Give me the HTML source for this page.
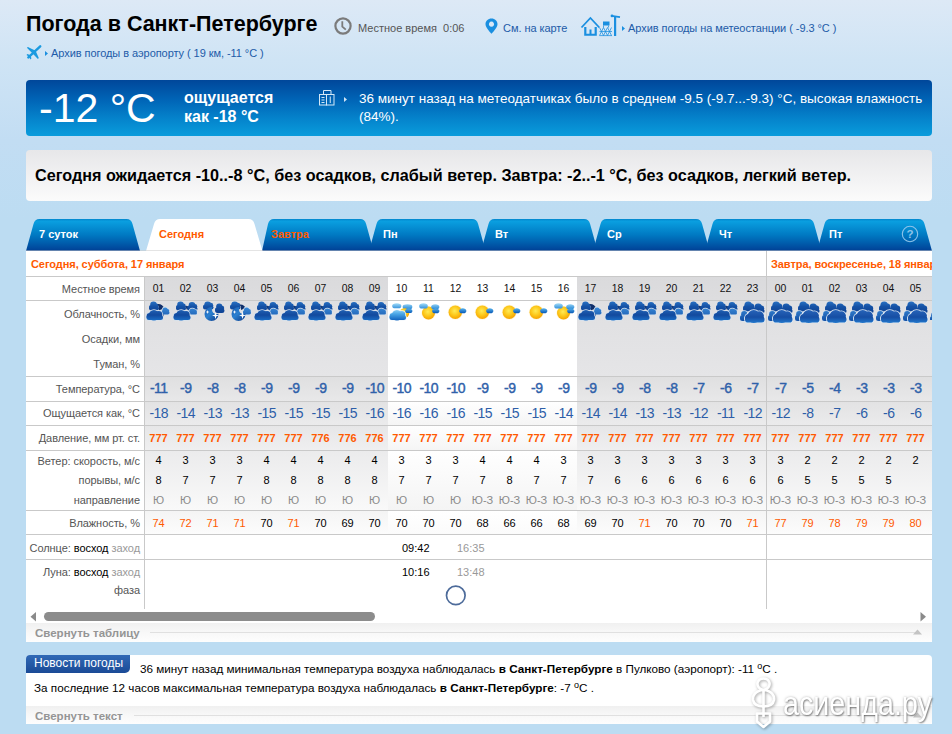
<!DOCTYPE html>
<html><head><meta charset="utf-8"><style>
*{margin:0;padding:0;box-sizing:border-box}
html,body{width:952px;height:734px;overflow:hidden}
body{position:relative;font-family:"Liberation Sans", sans-serif;background:linear-gradient(#dde9f6 0px,#cfe4f5 60px,#c2ddf3 140px,#bcdcf2 220px,#bcdcf2 734px);}
.title{position:absolute;left:26px;top:12px;font-size:21.5px;font-weight:bold;color:#000;white-space:nowrap}
.t11{position:absolute;font-size:11px;white-space:nowrap;line-height:16px}
.g5{color:#555}
.lnk{color:#1d5ba8;letter-spacing:-0.06px}
.bluebox{position:absolute;left:26px;top:80px;width:906px;height:56px;border-radius:4px;background:linear-gradient(#00479a 0%,#0064b6 35%,#0584cc 70%,#099cdc 100%);}
.bigT{position:absolute;left:13px;top:5px;font-size:41px;color:#fff;white-space:nowrap;line-height:46px}
.feels{position:absolute;left:158px;top:9px;font-size:16px;font-weight:bold;color:#fff;line-height:18.5px;white-space:nowrap}
.obs{position:absolute;left:333px;top:9.5px;font-size:13.5px;color:#fff;line-height:18px;white-space:nowrap}
.graybox{position:absolute;left:26px;top:150px;width:906px;height:51px;border-radius:4px;background:linear-gradient(#e7e7e9,#f3f3f4 60%,#fbfbfb);}
.fc{position:absolute;left:9px;top:15px;font-size:16.2px;font-weight:bold;color:#000;white-space:nowrap;line-height:20px}
.tabl{position:absolute;top:227px;font-size:11px;font-weight:bold;line-height:14px;white-space:nowrap}
.panel{position:absolute;left:26px;top:251px;width:906px;height:391px;background:#fff}
.shade{position:absolute;background:#e2e2e4}
.hl{position:absolute;height:1px;background:#c9c9c9}
.vl{position:absolute;width:1px;background:#c9c9c9}
.date{position:absolute;top:257px;font-size:11px;letter-spacing:-0.07px;font-weight:bold;color:#ff5a00;white-space:nowrap;line-height:14px}
.lab{position:absolute;left:26px;width:114px;text-align:right;font-size:11px;letter-spacing:-0.06px;color:#555;white-space:nowrap;line-height:14px}
.lab b{color:#000;font-weight:normal}
.g9{color:#999}
.c{position:absolute;width:27px;text-align:center;font-size:11px;line-height:14px;white-space:nowrap}
.c11{position:absolute;font-size:11px;line-height:14px;white-space:nowrap}
.b{color:#000}
.hr{color:#111;font-size:10.4px}
.tmp{color:#2f61aa;font-size:14px;letter-spacing:-0.5px;text-indent:0.5px;-webkit-text-stroke:0.4px #2f61aa}
.fl{color:#2d5ea8;font-size:14px;letter-spacing:-0.55px;text-indent:0.55px}
.pr{color:#ff5a00;font-weight:bold;font-size:11px}
.wd{color:#000}
.dr{color:#8a8a8a}
.hu{color:#000}
.hu.or{color:#ff5a00;-webkit-text-stroke:0px}
.coll{position:absolute;left:26px;width:906px;background:linear-gradient(#f0f0f0,#f8f8f8 50%,#fdfdfd)}
.coll span{position:absolute;left:9px;top:3px;font-size:11.5px;font-weight:bold;color:#959595;white-space:nowrap;line-height:14px}
.cline{position:absolute;height:1px;background:#e0e0e0}
.news{position:absolute;left:26px;top:655px;width:906px;height:51px;background:#fff;border-radius:4px 4px 0 0}
.badge{position:absolute;left:0;top:0;width:104px;height:18px;background:linear-gradient(#3069b6,#1a4a96);border-radius:4px 0 5px 0;color:#fff;font-size:12px;line-height:17px;padding-left:8px;white-space:nowrap}
.nt{position:absolute;font-size:11.7px;color:#000;white-space:nowrap;line-height:14px}
.nt sup{font-size:9px;vertical-align:4px;line-height:0}
.wm{position:absolute;left:751px;top:676px;width:201px;height:58px;color:#fff}
.wm span{position:absolute;left:32px;top:8px;font-size:33px;transform:scaleX(0.87);transform-origin:0 0;text-shadow:1px 1px 2px rgba(0,0,0,0.45),0 0 3px rgba(0,0,0,0.25);white-space:nowrap;line-height:40px}
.wm svg{filter:drop-shadow(1px 1px 1.5px rgba(0,0,0,0.35))}
</style></head>
<body>
<svg width="0" height="0" style="position:absolute"><defs>
<linearGradient id="gb" gradientUnits="userSpaceOnUse" x1="0" y1="1" x2="0" y2="12"><stop offset="0" stop-color="#2a74c6"/><stop offset="0.5" stop-color="#1552a6"/><stop offset="1" stop-color="#0f4496"/></linearGradient>
<linearGradient id="gm" gradientUnits="userSpaceOnUse" x1="0" y1="7" x2="0" y2="20"><stop offset="0" stop-color="#3a8ad8"/><stop offset="1" stop-color="#1553a8"/></linearGradient>
<linearGradient id="gf" gradientUnits="userSpaceOnUse" x1="0" y1="10" x2="0" y2="20"><stop offset="0" stop-color="#1f5fb2"/><stop offset="0.5" stop-color="#124a9e"/><stop offset="1" stop-color="#1a6ac2"/></linearGradient>
<linearGradient id="gf2" gradientUnits="userSpaceOnUse" x1="0" y1="10" x2="0" y2="23"><stop offset="0" stop-color="#2763b8"/><stop offset="0.55" stop-color="#164ea4"/><stop offset="1" stop-color="#2277cc"/></linearGradient>
<linearGradient id="gmoon" gradientUnits="userSpaceOnUse" x1="6" y1="8" x2="18" y2="21"><stop offset="0" stop-color="#1a5fb4"/><stop offset="0.45" stop-color="#2b80d0"/><stop offset="1" stop-color="#0f3f8e"/></linearGradient>
<linearGradient id="gl" gradientUnits="userSpaceOnUse" x1="0" y1="9" x2="0" y2="20"><stop offset="0" stop-color="#9ad8f8"/><stop offset="0.45" stop-color="#4aa6e6"/><stop offset="1" stop-color="#1466c0"/></linearGradient>
<linearGradient id="gs" gradientUnits="userSpaceOnUse" x1="0" y1="8" x2="0" y2="13"><stop offset="0" stop-color="#5cb8f0"/><stop offset="1" stop-color="#0b5cb8"/></linearGradient>
<linearGradient id="gs2" gradientUnits="userSpaceOnUse" x1="0" y1="3" x2="0" y2="9"><stop offset="0" stop-color="#a8e0fa"/><stop offset="1" stop-color="#2a8ad8"/></linearGradient>
<mask id="mmoon" maskUnits="userSpaceOnUse" x="0" y="0" width="27" height="23"><rect x="0" y="0" width="27" height="23" fill="#fff"/><circle cx="17.5" cy="9.5" r="4.6" fill="#000"/></mask>
<radialGradient id="sun" cx="0.45" cy="0.4" r="0.62"><stop offset="0" stop-color="#ffea55"/><stop offset="0.55" stop-color="#fcc71a"/><stop offset="1" stop-color="#f6a000"/></radialGradient>
</defs></svg>

<div class="title">Погода в Санкт-Петербурге</div>
<svg style="position:absolute;left:334px;top:17px" width="18" height="18" viewBox="0 0 18 18"><circle cx="9" cy="9" r="7.6" fill="none" stroke="#7b7b7b" stroke-width="2.2"/><path d="M8.3 4.2 V9.6 L11.8 12.6" fill="none" stroke="#7b7b7b" stroke-width="1.8"/></svg>
<div class="t11 g5" style="left:358px;top:20px">Местное время&nbsp;&nbsp;0:06</div>
<svg style="position:absolute;left:485px;top:18px" width="13" height="16" viewBox="0 0 13 16"><path d="M6.5 0.5 C3 0.5 0.5 3 0.5 6.3 C0.5 9.8 6.5 15.8 6.5 15.8 C6.5 15.8 12.5 9.8 12.5 6.3 C12.5 3 10 0.5 6.5 0.5 Z M6.5 3.6 A2.6 2.6 0 1 1 6.49 3.6 Z" fill="#1a8fe0" fill-rule="evenodd"/></svg>
<div class="t11 lnk" style="left:503px;top:20px">См. на карте</div>
<svg style="position:absolute;left:580px;top:14px" width="42" height="23" viewBox="0 0 42 23"><path d="M1.5 13.5 L10.4 4 L19.3 13.5" fill="none" stroke="#1a8fe0" stroke-width="1.8"/><path d="M4 12 V21.8 H17 V12" fill="none" stroke="#1a8fe0" stroke-width="0"/><path d="M4.2 13 V21.8 H16.8 V13 H14.6 V19.8 H11.5 V15.5 H9.5 V19.8 H6.4 V13 Z" fill="#1a8fe0"/><rect x="23" y="7.5" width="6.5" height="4" fill="#1a8fe0"/><path d="M19.5 21.5 L23.5 13.5 L27.5 21.5 L31.5 13.5 M19.5 13.5 L23.5 21.5 L27.5 13.5 L31.5 21.5 M19.5 17.5 H32 M19.5 21.6 H32 M23.5 11.5 V13.5 M28.5 11.5 V13.5" fill="none" stroke="#1a8fe0" stroke-width="0.9" opacity="0.85"/><rect x="34" y="2" width="2.2" height="20" fill="#1a8fe0"/><path d="M31.5 1.8 L40 3.2" stroke="#1a8fe0" stroke-width="1.8"/><circle cx="32" cy="1.9" r="1.4" fill="#1a8fe0"/></svg>
<svg style="position:absolute;left:622px;top:26px" width="4" height="5" viewBox="0 0 4 5"><path d="M0 0 L3 2.5 L0 5Z" fill="#1a8fe0"/></svg>
<div class="t11 lnk" style="left:628px;top:20px">Архив погоды на метеостанции ( -9.3 °C )</div>
<svg style="position:absolute;left:26px;top:45px" width="16" height="15" viewBox="0 0 16 15"><path d="M2.4 12.4 L14.2 1.3" stroke="#1a9ae0" stroke-width="2.4" stroke-linecap="round"/><path d="M0.9 2.7 L1.9 1.9 L9.6 5.8 L12.8 13.1 L11.9 13.9 L6.6 8.4 Z" fill="#1a9ae0"/><path d="M0.5 9.9 L1.4 8.9 L4.6 10.2 L5.4 13.6 L4.4 14.4 L3 11.8 Z" fill="#1a9ae0"/></svg>
<svg style="position:absolute;left:45px;top:51px" width="4" height="5" viewBox="0 0 4 5"><path d="M0 0 L3 2.5 L0 5Z" fill="#1a8fe0"/></svg>
<div class="t11 lnk" style="left:51px;top:45px">Архив погоды в аэропорту ( 19 км, -11 °C )</div>


<div class="bluebox">
 <div class="bigT">-12 °C</div>
 <div class="feels">ощущается<br>как -18 °C</div>
 <svg style="position:absolute;left:293px;top:9px" width="17" height="17" viewBox="0 0 17 17"><g fill="none" stroke="#d4e8f7" stroke-width="1"><path d="M4.5 5 V1.5 H12 V5"/><rect x="0.5" y="5.5" width="7" height="10.5"/><rect x="7.5" y="5.5" width="7.5" height="10.5"/><path d="M2.5 8.5 H5.5 M2.5 11 H5.5 M2.5 13.5 H5.5 M11.25 7.5 V14"/></g></svg>
 <svg style="position:absolute;left:318px;top:17px" width="3" height="5" viewBox="0 0 3 5"><path d="M0 0 L3 2.5 L0 5Z" fill="#cfe4f5"/></svg>
 <div class="obs">36 минут назад на метеодатчиках было в среднем -9.5 (-9.7...-9.3) °C, высокая влажность<br>(84%).</div>
</div>
<div class="graybox"><div class="fc">Сегодня ожидается -10..-8 °C, без осадков, слабый ветер. Завтра: -2..-1 °C, без осадков, легкий ветер.</div></div>

<svg style="position:absolute;left:26px;top:218px" width="906" height="34" viewBox="0 0 906 34">
<defs><linearGradient id="tg" gradientUnits="userSpaceOnUse" x1="0" y1="1" x2="0" y2="33"><stop offset="0" stop-color="#0386cd"/><stop offset="0.07" stop-color="#0a9fe0"/><stop offset="0.5" stop-color="#0079c2"/><stop offset="0.93" stop-color="#00489c"/><stop offset="1" stop-color="#003d92"/></linearGradient></defs>
<path d="M0.0 33 L7.5 6 Q8.8 1 13.5 1 L100.5 1 Q105.2 1 106.5 6 L114.0 33 Z" fill="url(#tg)"/>
<path d="M236.0 33 L242.0 6 Q243.3 1 248.0 1 L334.1 1 Q338.8 1 340.1 6 L347.6 33 Z" fill="url(#tg)"/>
<path d="M343.0 33 L350.5 6 Q351.8 1 356.5 1 L446.1 1 Q450.8 1 452.1 6 L459.6 33 Z" fill="url(#tg)"/>
<path d="M455.0 33 L462.5 6 Q463.8 1 468.5 1 L558.1 1 Q562.8 1 564.1 6 L571.6 33 Z" fill="url(#tg)"/>
<path d="M567.0 33 L574.5 6 Q575.8 1 580.5 1 L670.1 1 Q674.8 1 676.1 6 L683.6 33 Z" fill="url(#tg)"/>
<path d="M679.0 33 L686.5 6 Q687.8 1 692.5 1 L782.1 1 Q786.8 1 788.1 6 L795.6 33 Z" fill="url(#tg)"/>
<path d="M791.0 33 L798.5 6 Q799.8 1 804.5 1 L892.5 1 Q897.2 1 898.5 6 L906.0 33 Z" fill="url(#tg)"/>
<path d="M120.0 33 L128.0 6 Q129.3 1 134.0 1 L222.5 1 Q227.2 1 228.5 6 L236.5 33 Z" fill="#ffffff"/>
<rect x="0" y="32.5" width="906" height="1" fill="#c9c9c9"/>
</svg>
<div class="tabl" style="left:39px;color:#fff">7 суток</div>
<div class="tabl" style="left:159px;color:#ff5a00">Сегодня</div>
<div class="tabl" style="left:271px;color:#ff5a00">Завтра</div>
<div class="tabl" style="left:383px;color:#fff">Пн</div>
<div class="tabl" style="left:495px;color:#fff">Вт</div>
<div class="tabl" style="left:607px;color:#fff">Ср</div>
<div class="tabl" style="left:719px;color:#fff">Чт</div>
<div class="tabl" style="left:829px;color:#fff">Пт</div>
<svg style="position:absolute;left:901px;top:225px" width="18" height="18" viewBox="0 0 18 18"><circle cx="9" cy="9" r="7.7" fill="none" stroke="#8cc3ea" stroke-width="1.1"/><text x="9" y="13.2" text-anchor="middle" font-family="Liberation Sans" font-size="11.5" font-weight="bold" fill="#8cc3ea">?</text></svg>
<div class="panel"></div>
<div style="position:absolute;left:145px;width:243px;top:276px;height:24px;background:linear-gradient(#dadadc,#dddddf)"></div>
<div style="position:absolute;left:145px;width:243px;top:300px;height:76px;background:linear-gradient(#dfdfe1,#e5e5e7)"></div>
<div style="position:absolute;left:145px;width:243px;top:376px;height:25px;background:linear-gradient(#dfdfe0,#e8e8e9)"></div>
<div style="position:absolute;left:145px;width:243px;top:401px;height:24px;background:linear-gradient(#e2e2e3,#ebebec)"></div>
<div style="position:absolute;left:145px;width:243px;top:425px;height:25px;background:linear-gradient(#e6e6e7,#efeff0)"></div>
<div style="position:absolute;left:145px;width:243px;top:450px;height:60px;background:linear-gradient(#ebebec,#f9f9f9)"></div>
<div style="position:absolute;left:145px;width:243px;top:510px;height:24px;background:linear-gradient(#f4f4f4,#fcfcfc)"></div>
<div style="position:absolute;left:577px;width:189px;top:276px;height:24px;background:linear-gradient(#dadadc,#dddddf)"></div>
<div style="position:absolute;left:577px;width:189px;top:300px;height:76px;background:linear-gradient(#dfdfe1,#e5e5e7)"></div>
<div style="position:absolute;left:577px;width:189px;top:376px;height:25px;background:linear-gradient(#dfdfe0,#e8e8e9)"></div>
<div style="position:absolute;left:577px;width:189px;top:401px;height:24px;background:linear-gradient(#e2e2e3,#ebebec)"></div>
<div style="position:absolute;left:577px;width:189px;top:425px;height:25px;background:linear-gradient(#e6e6e7,#efeff0)"></div>
<div style="position:absolute;left:577px;width:189px;top:450px;height:60px;background:linear-gradient(#ebebec,#f9f9f9)"></div>
<div style="position:absolute;left:577px;width:189px;top:510px;height:24px;background:linear-gradient(#f4f4f4,#fcfcfc)"></div>
<div style="position:absolute;left:767px;width:165px;top:276px;height:24px;background:linear-gradient(#dadadc,#dddddf)"></div>
<div style="position:absolute;left:767px;width:165px;top:300px;height:76px;background:linear-gradient(#dfdfe1,#e5e5e7)"></div>
<div style="position:absolute;left:767px;width:165px;top:376px;height:25px;background:linear-gradient(#dfdfe0,#e8e8e9)"></div>
<div style="position:absolute;left:767px;width:165px;top:401px;height:24px;background:linear-gradient(#e2e2e3,#ebebec)"></div>
<div style="position:absolute;left:767px;width:165px;top:425px;height:25px;background:linear-gradient(#e6e6e7,#efeff0)"></div>
<div style="position:absolute;left:767px;width:165px;top:450px;height:60px;background:linear-gradient(#ebebec,#f9f9f9)"></div>
<div style="position:absolute;left:767px;width:165px;top:510px;height:24px;background:linear-gradient(#f4f4f4,#fcfcfc)"></div>
<div style="position:absolute;left:388px;width:189px;top:401px;height:24px;background:linear-gradient(#ffffff,#f5f5f5)"></div>
<div style="position:absolute;left:388px;width:189px;top:425px;height:25px;background:linear-gradient(#ffffff,#f5f5f5)"></div>
<div style="position:absolute;left:388px;width:189px;top:450px;height:60px;background:linear-gradient(#ffffff,#f4f4f4)"></div>
<div style="position:absolute;left:388px;width:189px;top:510px;height:24px;background:linear-gradient(#ffffff,#fbfbfb)"></div>
<div class="hl" style="top:276px;left:26px;width:906px"></div>
<div class="hl" style="top:300px;left:26px;width:906px"></div>
<div class="hl" style="top:376px;left:26px;width:906px"></div>
<div class="hl" style="top:401px;left:26px;width:906px"></div>
<div class="hl" style="top:425px;left:26px;width:906px"></div>
<div class="hl" style="top:450px;left:26px;width:906px"></div>
<div class="hl" style="top:510px;left:26px;width:906px"></div>
<div class="hl" style="top:534px;left:26px;width:906px"></div>
<div class="hl" style="top:559px;left:26px;width:906px"></div>
<div class="vl" style="left:144px;top:276px;height:333px"></div>
<div class="vl" style="left:766px;top:251px;height:358px"></div>
<div class="date" style="left:31px">Сегодня, суббота, 17 января</div>
<div class="date" style="left:771px;width:161px;overflow:hidden">Завтра, воскресенье, 18 января</div>
<div class="lab" style="top:282px">Местное время</div>
<div class="lab" style="top:307px">Облачность, %</div>
<div class="lab" style="top:332px">Осадки, мм</div>
<div class="lab" style="top:357px">Туман, %</div>
<div class="lab" style="top:382px">Температура, °C</div>
<div class="lab" style="top:406px">Ощущается как, °C</div>
<div class="lab" style="top:431px">Давление, мм рт. ст.</div>
<div class="lab" style="top:454px">Ветер: скорость, м/с</div>
<div class="lab" style="top:473px">порывы, м/с</div>
<div class="lab" style="top:493px">направление</div>
<div class="lab" style="top:516px">Влажность, %</div>
<div class="lab" style="top:541px">Солнце: <b>восход</b> <span class="g9">заход</span></div>
<div class="lab" style="top:565px">Луна: <b>восход</b> <span class="g9">заход</span></div>
<div class="lab" style="top:583px">фаза</div>
<div class="c hr" style="left:145px;top:282px">01</div>
<svg style="position:absolute;left:145px;top:300px" width="27" height="23" viewBox="0 0 27 23"><g fill="url(#gb)"><rect x="4.00" y="6.00" width="10.00" height="4.50" rx="2.25"/><circle cx="8.50" cy="4.80" r="3.30"/><circle cx="11.40" cy="5.77" r="2.30"/><circle cx="6.00" cy="7.12" r="2.00"/></g><path d="M12.5 4 Q17.5 3.5 19.5 9 Q16.5 8.5 14 10.5 Q14.5 6.5 12.5 4Z" fill="#0f2f6a"/><g fill="#d6e2ee"><rect x="15.80" y="10.30" width="9.40" height="4.90" rx="2.45"/><circle cx="20.10" cy="10.14" r="3.34"/><circle cx="22.42" cy="10.82" r="2.54"/><circle cx="18.10" cy="11.88" r="2.30"/></g><g fill="url(#gm)"><rect x="16.50" y="11.00" width="8.00" height="3.50" rx="1.75"/><circle cx="20.10" cy="10.14" r="2.64"/><circle cx="22.42" cy="10.82" r="1.84"/><circle cx="18.10" cy="11.88" r="1.60"/></g><path d="M15.5 15 L19 14.5 L17.5 18.5Z" fill="#123a7a"/><g fill="#d6e2ee"><rect x="0.70" y="14.20" width="18.10" height="6.60" rx="3.30"/><circle cx="8.93" cy="15.20" r="6.00"/><circle cx="13.71" cy="14.64" r="4.40"/><circle cx="4.80" cy="16.25" r="4.00"/></g><g fill="url(#gf)"><rect x="1.50" y="15.00" width="16.50" height="5.00" rx="2.50"/><circle cx="8.93" cy="15.20" r="5.20"/><circle cx="13.71" cy="14.64" r="3.60"/><circle cx="4.80" cy="16.25" r="3.20"/></g></svg>
<div class="c tmp" style="left:145px;top:381px">-11</div>
<div class="c fl" style="left:145px;top:406px">-18</div>
<div class="c pr" style="left:145px;top:431px">777</div>
<div class="c wd" style="left:145px;top:453px">4</div>
<div class="c wd" style="left:145px;top:473px">8</div>
<div class="c dr" style="left:145px;top:493px">Ю</div>
<div class="c hu or" style="left:145px;top:516px">74</div>
<div class="c hr" style="left:172px;top:282px">02</div>
<svg style="position:absolute;left:172px;top:300px" width="27" height="23" viewBox="0 0 27 23"><g fill="url(#gb)"><rect x="4.00" y="6.00" width="10.00" height="4.50" rx="2.25"/><circle cx="8.50" cy="4.80" r="3.30"/><circle cx="11.40" cy="5.77" r="2.30"/><circle cx="6.00" cy="7.12" r="2.00"/></g><path d="M13 6 Q16 5 17 8 L15 10Z" fill="#123a7a"/><g fill="url(#gb)"><rect x="15.50" y="6.50" width="10.00" height="4.50" rx="2.25"/><circle cx="20.00" cy="5.30" r="3.30"/><circle cx="22.90" cy="6.27" r="2.30"/><circle cx="17.50" cy="7.62" r="2.00"/></g><g fill="#d6e2ee"><rect x="15.80" y="10.80" width="9.90" height="4.40" rx="2.20"/><circle cx="20.32" cy="11.30" r="3.50"/><circle cx="22.79" cy="11.30" r="2.66"/><circle cx="18.20" cy="12.25" r="2.40"/></g><g fill="url(#gm)"><rect x="16.50" y="11.50" width="8.50" height="3.00" rx="1.50"/><circle cx="20.32" cy="11.30" r="2.81"/><circle cx="22.79" cy="11.30" r="1.96"/><circle cx="18.20" cy="12.25" r="1.70"/></g><g fill="#d6e2ee"><rect x="0.70" y="14.20" width="18.60" height="6.60" rx="3.30"/><circle cx="9.15" cy="15.20" r="6.00"/><circle cx="14.08" cy="14.64" r="4.40"/><circle cx="4.90" cy="16.25" r="4.00"/></g><g fill="url(#gf)"><rect x="1.50" y="15.00" width="17.00" height="5.00" rx="2.50"/><circle cx="9.15" cy="15.20" r="5.20"/><circle cx="14.08" cy="14.64" r="3.60"/><circle cx="4.90" cy="16.25" r="3.20"/></g></svg>
<div class="c tmp" style="left:172px;top:381px">-9</div>
<div class="c fl" style="left:172px;top:406px">-14</div>
<div class="c pr" style="left:172px;top:431px">777</div>
<div class="c wd" style="left:172px;top:453px">3</div>
<div class="c wd" style="left:172px;top:473px">7</div>
<div class="c dr" style="left:172px;top:493px">Ю</div>
<div class="c hu or" style="left:172px;top:516px">72</div>
<div class="c hr" style="left:199px;top:282px">03</div>
<svg style="position:absolute;left:199px;top:300px" width="27" height="23" viewBox="0 0 27 23"><g fill="url(#gb)"><rect x="4.00" y="5.50" width="10.50" height="4.00" rx="2.00"/><circle cx="8.73" cy="4.96" r="3.47"/><circle cx="11.77" cy="5.26" r="2.42"/><circle cx="6.10" cy="6.50" r="2.10"/></g><g fill="url(#gb)"><rect x="16.00" y="8.25" width="9.50" height="4.75" rx="2.38"/><circle cx="20.27" cy="6.63" r="3.14"/><circle cx="23.03" cy="8.03" r="2.19"/><circle cx="17.90" cy="9.44" r="1.90"/></g><circle cx="12.5" cy="14" r="7" fill="url(#gmoon)" mask="url(#mmoon)"/><path d="M8.5 10 L9 11.5 L10.5 12 L9 12.5 L8.5 14 L8 12.5 L6.5 12 L8 11.5Z" fill="#fff"/><path d="M16.5 12 L17.3 14.7 L20 15.5 L17.3 16.3 L16.5 19 L15.7 16.3 L13 15.5 L15.7 14.7Z" fill="#fff"/></svg>
<div class="c tmp" style="left:199px;top:381px">-8</div>
<div class="c fl" style="left:199px;top:406px">-13</div>
<div class="c pr" style="left:199px;top:431px">777</div>
<div class="c wd" style="left:199px;top:453px">3</div>
<div class="c wd" style="left:199px;top:473px">7</div>
<div class="c dr" style="left:199px;top:493px">Ю</div>
<div class="c hu or" style="left:199px;top:516px">71</div>
<div class="c hr" style="left:226px;top:282px">04</div>
<svg style="position:absolute;left:226px;top:300px" width="27" height="23" viewBox="0 0 27 23"><g fill="url(#gb)"><rect x="4.00" y="5.50" width="10.50" height="4.00" rx="2.00"/><circle cx="8.73" cy="4.96" r="3.47"/><circle cx="11.77" cy="5.26" r="2.42"/><circle cx="6.10" cy="6.50" r="2.10"/></g><path d="M13.5 4.5 Q18.5 4 20 9 Q17 8.5 15 10 Q15.5 6.5 13.5 4.5Z" fill="#0f2f6a"/><g fill="#d6e2ee"><rect x="16.30" y="10.30" width="9.40" height="4.90" rx="2.45"/><circle cx="20.60" cy="10.14" r="3.34"/><circle cx="22.92" cy="10.82" r="2.54"/><circle cx="18.60" cy="11.88" r="2.30"/></g><g fill="url(#gm)"><rect x="17.00" y="11.00" width="8.00" height="3.50" rx="1.75"/><circle cx="20.60" cy="10.14" r="2.64"/><circle cx="22.92" cy="10.82" r="1.84"/><circle cx="18.60" cy="11.88" r="1.60"/></g><circle cx="12.5" cy="14" r="7" fill="url(#gmoon)" mask="url(#mmoon)"/><path d="M8.5 10 L9 11.5 L10.5 12 L9 12.5 L8.5 14 L8 12.5 L6.5 12 L8 11.5Z" fill="#fff"/><path d="M16.5 12 L17.3 14.7 L20 15.5 L17.3 16.3 L16.5 19 L15.7 16.3 L13 15.5 L15.7 14.7Z" fill="#fff"/></svg>
<div class="c tmp" style="left:226px;top:381px">-8</div>
<div class="c fl" style="left:226px;top:406px">-13</div>
<div class="c pr" style="left:226px;top:431px">777</div>
<div class="c wd" style="left:226px;top:453px">3</div>
<div class="c wd" style="left:226px;top:473px">7</div>
<div class="c dr" style="left:226px;top:493px">Ю</div>
<div class="c hu or" style="left:226px;top:516px">71</div>
<div class="c hr" style="left:253px;top:282px">05</div>
<svg style="position:absolute;left:253px;top:300px" width="27" height="23" viewBox="0 0 27 23"><g fill="url(#gb)"><rect x="4.00" y="6.00" width="10.00" height="4.50" rx="2.25"/><circle cx="8.50" cy="4.80" r="3.30"/><circle cx="11.40" cy="5.77" r="2.30"/><circle cx="6.00" cy="7.12" r="2.00"/></g><path d="M13 6 Q16 5 17 8 L15 10Z" fill="#123a7a"/><g fill="url(#gb)"><rect x="15.50" y="6.50" width="10.00" height="4.50" rx="2.25"/><circle cx="20.00" cy="5.30" r="3.30"/><circle cx="22.90" cy="6.27" r="2.30"/><circle cx="17.50" cy="7.62" r="2.00"/></g><g fill="#d6e2ee"><rect x="15.80" y="10.80" width="9.90" height="4.40" rx="2.20"/><circle cx="20.32" cy="11.30" r="3.50"/><circle cx="22.79" cy="11.30" r="2.66"/><circle cx="18.20" cy="12.25" r="2.40"/></g><g fill="url(#gm)"><rect x="16.50" y="11.50" width="8.50" height="3.00" rx="1.50"/><circle cx="20.32" cy="11.30" r="2.81"/><circle cx="22.79" cy="11.30" r="1.96"/><circle cx="18.20" cy="12.25" r="1.70"/></g><g fill="#d6e2ee"><rect x="0.70" y="14.20" width="18.60" height="6.60" rx="3.30"/><circle cx="9.15" cy="15.20" r="6.00"/><circle cx="14.08" cy="14.64" r="4.40"/><circle cx="4.90" cy="16.25" r="4.00"/></g><g fill="url(#gf)"><rect x="1.50" y="15.00" width="17.00" height="5.00" rx="2.50"/><circle cx="9.15" cy="15.20" r="5.20"/><circle cx="14.08" cy="14.64" r="3.60"/><circle cx="4.90" cy="16.25" r="3.20"/></g></svg>
<div class="c tmp" style="left:253px;top:381px">-9</div>
<div class="c fl" style="left:253px;top:406px">-15</div>
<div class="c pr" style="left:253px;top:431px">777</div>
<div class="c wd" style="left:253px;top:453px">4</div>
<div class="c wd" style="left:253px;top:473px">8</div>
<div class="c dr" style="left:253px;top:493px">Ю</div>
<div class="c hu " style="left:253px;top:516px">70</div>
<div class="c hr" style="left:280px;top:282px">06</div>
<svg style="position:absolute;left:280px;top:300px" width="27" height="23" viewBox="0 0 27 23"><g fill="url(#gb)"><rect x="4.00" y="6.00" width="10.00" height="4.50" rx="2.25"/><circle cx="8.50" cy="4.80" r="3.30"/><circle cx="11.40" cy="5.77" r="2.30"/><circle cx="6.00" cy="7.12" r="2.00"/></g><path d="M13 6 Q16 5 17 8 L15 10Z" fill="#123a7a"/><g fill="url(#gb)"><rect x="15.50" y="6.50" width="10.00" height="4.50" rx="2.25"/><circle cx="20.00" cy="5.30" r="3.30"/><circle cx="22.90" cy="6.27" r="2.30"/><circle cx="17.50" cy="7.62" r="2.00"/></g><g fill="#d6e2ee"><rect x="15.80" y="10.80" width="9.90" height="4.40" rx="2.20"/><circle cx="20.32" cy="11.30" r="3.50"/><circle cx="22.79" cy="11.30" r="2.66"/><circle cx="18.20" cy="12.25" r="2.40"/></g><g fill="url(#gm)"><rect x="16.50" y="11.50" width="8.50" height="3.00" rx="1.50"/><circle cx="20.32" cy="11.30" r="2.81"/><circle cx="22.79" cy="11.30" r="1.96"/><circle cx="18.20" cy="12.25" r="1.70"/></g><g fill="#d6e2ee"><rect x="0.70" y="14.20" width="18.60" height="6.60" rx="3.30"/><circle cx="9.15" cy="15.20" r="6.00"/><circle cx="14.08" cy="14.64" r="4.40"/><circle cx="4.90" cy="16.25" r="4.00"/></g><g fill="url(#gf)"><rect x="1.50" y="15.00" width="17.00" height="5.00" rx="2.50"/><circle cx="9.15" cy="15.20" r="5.20"/><circle cx="14.08" cy="14.64" r="3.60"/><circle cx="4.90" cy="16.25" r="3.20"/></g></svg>
<div class="c tmp" style="left:280px;top:381px">-9</div>
<div class="c fl" style="left:280px;top:406px">-15</div>
<div class="c pr" style="left:280px;top:431px">777</div>
<div class="c wd" style="left:280px;top:453px">4</div>
<div class="c wd" style="left:280px;top:473px">8</div>
<div class="c dr" style="left:280px;top:493px">Ю</div>
<div class="c hu or" style="left:280px;top:516px">71</div>
<div class="c hr" style="left:307px;top:282px">07</div>
<svg style="position:absolute;left:307px;top:300px" width="27" height="23" viewBox="0 0 27 23"><g fill="url(#gb)"><rect x="4.00" y="6.00" width="10.00" height="4.50" rx="2.25"/><circle cx="8.50" cy="4.80" r="3.30"/><circle cx="11.40" cy="5.77" r="2.30"/><circle cx="6.00" cy="7.12" r="2.00"/></g><path d="M13 6 Q16 5 17 8 L15 10Z" fill="#123a7a"/><g fill="url(#gb)"><rect x="15.50" y="6.50" width="10.00" height="4.50" rx="2.25"/><circle cx="20.00" cy="5.30" r="3.30"/><circle cx="22.90" cy="6.27" r="2.30"/><circle cx="17.50" cy="7.62" r="2.00"/></g><g fill="#d6e2ee"><rect x="15.80" y="10.80" width="9.90" height="4.40" rx="2.20"/><circle cx="20.32" cy="11.30" r="3.50"/><circle cx="22.79" cy="11.30" r="2.66"/><circle cx="18.20" cy="12.25" r="2.40"/></g><g fill="url(#gm)"><rect x="16.50" y="11.50" width="8.50" height="3.00" rx="1.50"/><circle cx="20.32" cy="11.30" r="2.81"/><circle cx="22.79" cy="11.30" r="1.96"/><circle cx="18.20" cy="12.25" r="1.70"/></g><g fill="#d6e2ee"><rect x="0.70" y="14.20" width="18.60" height="6.60" rx="3.30"/><circle cx="9.15" cy="15.20" r="6.00"/><circle cx="14.08" cy="14.64" r="4.40"/><circle cx="4.90" cy="16.25" r="4.00"/></g><g fill="url(#gf)"><rect x="1.50" y="15.00" width="17.00" height="5.00" rx="2.50"/><circle cx="9.15" cy="15.20" r="5.20"/><circle cx="14.08" cy="14.64" r="3.60"/><circle cx="4.90" cy="16.25" r="3.20"/></g></svg>
<div class="c tmp" style="left:307px;top:381px">-9</div>
<div class="c fl" style="left:307px;top:406px">-15</div>
<div class="c pr" style="left:307px;top:431px">776</div>
<div class="c wd" style="left:307px;top:453px">4</div>
<div class="c wd" style="left:307px;top:473px">8</div>
<div class="c dr" style="left:307px;top:493px">Ю</div>
<div class="c hu " style="left:307px;top:516px">70</div>
<div class="c hr" style="left:334px;top:282px">08</div>
<svg style="position:absolute;left:334px;top:300px" width="27" height="23" viewBox="0 0 27 23"><g fill="url(#gb)"><rect x="4.00" y="6.00" width="10.00" height="4.50" rx="2.25"/><circle cx="8.50" cy="4.80" r="3.30"/><circle cx="11.40" cy="5.77" r="2.30"/><circle cx="6.00" cy="7.12" r="2.00"/></g><path d="M13 6 Q16 5 17 8 L15 10Z" fill="#123a7a"/><g fill="url(#gb)"><rect x="15.50" y="6.50" width="10.00" height="4.50" rx="2.25"/><circle cx="20.00" cy="5.30" r="3.30"/><circle cx="22.90" cy="6.27" r="2.30"/><circle cx="17.50" cy="7.62" r="2.00"/></g><g fill="#d6e2ee"><rect x="15.80" y="10.80" width="9.90" height="4.40" rx="2.20"/><circle cx="20.32" cy="11.30" r="3.50"/><circle cx="22.79" cy="11.30" r="2.66"/><circle cx="18.20" cy="12.25" r="2.40"/></g><g fill="url(#gm)"><rect x="16.50" y="11.50" width="8.50" height="3.00" rx="1.50"/><circle cx="20.32" cy="11.30" r="2.81"/><circle cx="22.79" cy="11.30" r="1.96"/><circle cx="18.20" cy="12.25" r="1.70"/></g><g fill="#d6e2ee"><rect x="0.70" y="14.20" width="18.60" height="6.60" rx="3.30"/><circle cx="9.15" cy="15.20" r="6.00"/><circle cx="14.08" cy="14.64" r="4.40"/><circle cx="4.90" cy="16.25" r="4.00"/></g><g fill="url(#gf)"><rect x="1.50" y="15.00" width="17.00" height="5.00" rx="2.50"/><circle cx="9.15" cy="15.20" r="5.20"/><circle cx="14.08" cy="14.64" r="3.60"/><circle cx="4.90" cy="16.25" r="3.20"/></g></svg>
<div class="c tmp" style="left:334px;top:381px">-9</div>
<div class="c fl" style="left:334px;top:406px">-15</div>
<div class="c pr" style="left:334px;top:431px">776</div>
<div class="c wd" style="left:334px;top:453px">4</div>
<div class="c wd" style="left:334px;top:473px">8</div>
<div class="c dr" style="left:334px;top:493px">Ю</div>
<div class="c hu " style="left:334px;top:516px">69</div>
<div class="c hr" style="left:361px;top:282px">09</div>
<svg style="position:absolute;left:361px;top:300px" width="27" height="23" viewBox="0 0 27 23"><g fill="url(#gb)"><rect x="4.00" y="6.00" width="10.00" height="4.50" rx="2.25"/><circle cx="8.50" cy="4.80" r="3.30"/><circle cx="11.40" cy="5.77" r="2.30"/><circle cx="6.00" cy="7.12" r="2.00"/></g><path d="M13 6 Q16 5 17 8 L15 10Z" fill="#123a7a"/><g fill="url(#gb)"><rect x="15.50" y="6.50" width="10.00" height="4.50" rx="2.25"/><circle cx="20.00" cy="5.30" r="3.30"/><circle cx="22.90" cy="6.27" r="2.30"/><circle cx="17.50" cy="7.62" r="2.00"/></g><g fill="#d6e2ee"><rect x="15.80" y="10.80" width="9.90" height="4.40" rx="2.20"/><circle cx="20.32" cy="11.30" r="3.50"/><circle cx="22.79" cy="11.30" r="2.66"/><circle cx="18.20" cy="12.25" r="2.40"/></g><g fill="url(#gm)"><rect x="16.50" y="11.50" width="8.50" height="3.00" rx="1.50"/><circle cx="20.32" cy="11.30" r="2.81"/><circle cx="22.79" cy="11.30" r="1.96"/><circle cx="18.20" cy="12.25" r="1.70"/></g><g fill="#d6e2ee"><rect x="0.70" y="14.20" width="18.60" height="6.60" rx="3.30"/><circle cx="9.15" cy="15.20" r="6.00"/><circle cx="14.08" cy="14.64" r="4.40"/><circle cx="4.90" cy="16.25" r="4.00"/></g><g fill="url(#gf)"><rect x="1.50" y="15.00" width="17.00" height="5.00" rx="2.50"/><circle cx="9.15" cy="15.20" r="5.20"/><circle cx="14.08" cy="14.64" r="3.60"/><circle cx="4.90" cy="16.25" r="3.20"/></g></svg>
<div class="c tmp" style="left:361px;top:381px">-10</div>
<div class="c fl" style="left:361px;top:406px">-16</div>
<div class="c pr" style="left:361px;top:431px">776</div>
<div class="c wd" style="left:361px;top:453px">4</div>
<div class="c wd" style="left:361px;top:473px">8</div>
<div class="c dr" style="left:361px;top:493px">Ю</div>
<div class="c hu " style="left:361px;top:516px">70</div>
<div class="c hr" style="left:388px;top:282px">10</div>
<svg style="position:absolute;left:388px;top:300px" width="27" height="23" viewBox="0 0 27 23"><path d="M5.90 8.30 A2.40 2.40 0 0 1 4.94 4.22 Q8.75 2.30 12.56 4.22 A2.40 2.40 0 0 1 11.60 8.30 Z" fill="url(#gs2)"/><path d="M16.40 9.20 A2.40 2.40 0 0 1 15.44 5.12 Q19.50 3.20 23.56 5.12 A2.40 2.40 0 0 1 22.60 9.20 Z" fill="url(#gs2)"/><circle cx="16.5" cy="13" r="4.8" fill="url(#sun)"/><path d="M18.60 13.00 A2.10 2.10 0 0 1 17.76 9.43 Q20.75 7.75 23.74 9.43 A2.10 2.10 0 0 1 22.90 13.00 Z" fill="url(#gs)"/><g fill="#f4f9fd"><rect x="0.80" y="14.30" width="17.90" height="6.40" rx="3.20"/><circle cx="8.93" cy="15.20" r="5.90"/><circle cx="13.71" cy="14.64" r="4.30"/><circle cx="4.80" cy="16.25" r="3.90"/></g><g fill="url(#gl)"><rect x="1.50" y="15.00" width="16.50" height="5.00" rx="2.50"/><circle cx="8.93" cy="15.20" r="5.20"/><circle cx="13.71" cy="14.64" r="3.60"/><circle cx="4.80" cy="16.25" r="3.20"/></g></svg>
<div class="c tmp" style="left:388px;top:381px">-10</div>
<div class="c fl" style="left:388px;top:406px">-16</div>
<div class="c pr" style="left:388px;top:431px">777</div>
<div class="c wd" style="left:388px;top:453px">3</div>
<div class="c wd" style="left:388px;top:473px">7</div>
<div class="c dr" style="left:388px;top:493px">Ю</div>
<div class="c hu " style="left:388px;top:516px">70</div>
<div class="c hr" style="left:415px;top:282px">11</div>
<svg style="position:absolute;left:415px;top:300px" width="27" height="23" viewBox="0 0 27 23"><circle cx="13.5" cy="13" r="7.1" fill="#fff0b0" opacity="0.5"/><circle cx="13.5" cy="13" r="6.5" fill="url(#sun)"/><path d="M5.90 8.40 A2.40 2.40 0 0 1 4.94 4.32 Q8.50 2.40 12.06 4.32 A2.40 2.40 0 0 1 11.10 8.40 Z" fill="url(#gs2)"/><path d="M17.80 9.20 A2.30 2.30 0 0 1 16.88 5.29 Q20.25 3.45 23.62 5.29 A2.30 2.30 0 0 1 22.70 9.20 Z" fill="url(#gs2)"/><path d="M18.70 13.20 A2.20 2.20 0 0 1 17.82 9.46 Q20.75 7.70 23.68 9.46 A2.20 2.20 0 0 1 22.80 13.20 Z" fill="url(#gs)"/></svg>
<div class="c tmp" style="left:415px;top:381px">-10</div>
<div class="c fl" style="left:415px;top:406px">-16</div>
<div class="c pr" style="left:415px;top:431px">777</div>
<div class="c wd" style="left:415px;top:453px">3</div>
<div class="c wd" style="left:415px;top:473px">7</div>
<div class="c dr" style="left:415px;top:493px">Ю</div>
<div class="c hu " style="left:415px;top:516px">70</div>
<div class="c hr" style="left:442px;top:282px">12</div>
<svg style="position:absolute;left:442px;top:300px" width="27" height="23" viewBox="0 0 27 23"><circle cx="13.3" cy="12.2" r="7.4" fill="#fff0b0" opacity="0.5"/><circle cx="13.3" cy="12.2" r="6.7" fill="url(#sun)"/><path d="M18.85 13.30 A2.35 2.35 0 0 1 17.91 9.30 Q20.75 7.42 23.59 9.30 A2.35 2.35 0 0 1 22.65 13.30 Z" fill="url(#gs)"/></svg>
<div class="c tmp" style="left:442px;top:381px">-10</div>
<div class="c fl" style="left:442px;top:406px">-16</div>
<div class="c pr" style="left:442px;top:431px">777</div>
<div class="c wd" style="left:442px;top:453px">3</div>
<div class="c wd" style="left:442px;top:473px">7</div>
<div class="c dr" style="left:442px;top:493px">Ю</div>
<div class="c hu " style="left:442px;top:516px">70</div>
<div class="c hr" style="left:469px;top:282px">13</div>
<svg style="position:absolute;left:469px;top:300px" width="27" height="23" viewBox="0 0 27 23"><circle cx="13.3" cy="12.2" r="7.4" fill="#fff0b0" opacity="0.5"/><circle cx="13.3" cy="12.2" r="6.7" fill="url(#sun)"/><path d="M18.85 13.30 A2.35 2.35 0 0 1 17.91 9.30 Q20.75 7.42 23.59 9.30 A2.35 2.35 0 0 1 22.65 13.30 Z" fill="url(#gs)"/></svg>
<div class="c tmp" style="left:469px;top:381px">-9</div>
<div class="c fl" style="left:469px;top:406px">-15</div>
<div class="c pr" style="left:469px;top:431px">777</div>
<div class="c wd" style="left:469px;top:453px">4</div>
<div class="c wd" style="left:469px;top:473px">7</div>
<div class="c dr" style="left:469px;top:493px">Ю-З</div>
<div class="c hu " style="left:469px;top:516px">68</div>
<div class="c hr" style="left:496px;top:282px">14</div>
<svg style="position:absolute;left:496px;top:300px" width="27" height="23" viewBox="0 0 27 23"><circle cx="13.3" cy="12.2" r="7.4" fill="#fff0b0" opacity="0.5"/><circle cx="13.3" cy="12.2" r="6.7" fill="url(#sun)"/><path d="M18.85 13.30 A2.35 2.35 0 0 1 17.91 9.30 Q20.75 7.42 23.59 9.30 A2.35 2.35 0 0 1 22.65 13.30 Z" fill="url(#gs)"/></svg>
<div class="c tmp" style="left:496px;top:381px">-9</div>
<div class="c fl" style="left:496px;top:406px">-15</div>
<div class="c pr" style="left:496px;top:431px">777</div>
<div class="c wd" style="left:496px;top:453px">4</div>
<div class="c wd" style="left:496px;top:473px">8</div>
<div class="c dr" style="left:496px;top:493px">Ю-З</div>
<div class="c hu " style="left:496px;top:516px">66</div>
<div class="c hr" style="left:523px;top:282px">15</div>
<svg style="position:absolute;left:523px;top:300px" width="27" height="23" viewBox="0 0 27 23"><circle cx="13.3" cy="12.2" r="7.4" fill="#fff0b0" opacity="0.5"/><circle cx="13.3" cy="12.2" r="6.7" fill="url(#sun)"/><path d="M18.85 13.30 A2.35 2.35 0 0 1 17.91 9.30 Q20.75 7.42 23.59 9.30 A2.35 2.35 0 0 1 22.65 13.30 Z" fill="url(#gs)"/></svg>
<div class="c tmp" style="left:523px;top:381px">-9</div>
<div class="c fl" style="left:523px;top:406px">-15</div>
<div class="c pr" style="left:523px;top:431px">777</div>
<div class="c wd" style="left:523px;top:453px">4</div>
<div class="c wd" style="left:523px;top:473px">7</div>
<div class="c dr" style="left:523px;top:493px">Ю-З</div>
<div class="c hu " style="left:523px;top:516px">66</div>
<div class="c hr" style="left:550px;top:282px">16</div>
<svg style="position:absolute;left:550px;top:300px" width="27" height="23" viewBox="0 0 27 23"><circle cx="13.5" cy="13" r="7.1" fill="#fff0b0" opacity="0.5"/><circle cx="13.5" cy="13" r="6.5" fill="url(#sun)"/><path d="M5.90 8.40 A2.40 2.40 0 0 1 4.94 4.32 Q8.50 2.40 12.06 4.32 A2.40 2.40 0 0 1 11.10 8.40 Z" fill="url(#gs2)"/><path d="M17.80 9.20 A2.30 2.30 0 0 1 16.88 5.29 Q20.25 3.45 23.62 5.29 A2.30 2.30 0 0 1 22.70 9.20 Z" fill="url(#gs2)"/><path d="M18.70 13.20 A2.20 2.20 0 0 1 17.82 9.46 Q20.75 7.70 23.68 9.46 A2.20 2.20 0 0 1 22.80 13.20 Z" fill="url(#gs)"/></svg>
<div class="c tmp" style="left:550px;top:381px">-9</div>
<div class="c fl" style="left:550px;top:406px">-14</div>
<div class="c pr" style="left:550px;top:431px">777</div>
<div class="c wd" style="left:550px;top:453px">3</div>
<div class="c wd" style="left:550px;top:473px">7</div>
<div class="c dr" style="left:550px;top:493px">Ю-З</div>
<div class="c hu " style="left:550px;top:516px">68</div>
<div class="c hr" style="left:577px;top:282px">17</div>
<svg style="position:absolute;left:577px;top:300px" width="27" height="23" viewBox="0 0 27 23"><g fill="url(#gb)"><rect x="4.00" y="6.00" width="10.00" height="4.50" rx="2.25"/><circle cx="8.50" cy="4.80" r="3.30"/><circle cx="11.40" cy="5.77" r="2.30"/><circle cx="6.00" cy="7.12" r="2.00"/></g><path d="M12.5 4 Q17.5 3.5 19.5 9 Q16.5 8.5 14 10.5 Q14.5 6.5 12.5 4Z" fill="#0f2f6a"/><g fill="#d6e2ee"><rect x="15.80" y="10.30" width="9.40" height="4.90" rx="2.45"/><circle cx="20.10" cy="10.14" r="3.34"/><circle cx="22.42" cy="10.82" r="2.54"/><circle cx="18.10" cy="11.88" r="2.30"/></g><g fill="url(#gm)"><rect x="16.50" y="11.00" width="8.00" height="3.50" rx="1.75"/><circle cx="20.10" cy="10.14" r="2.64"/><circle cx="22.42" cy="10.82" r="1.84"/><circle cx="18.10" cy="11.88" r="1.60"/></g><path d="M15.5 15 L19 14.5 L17.5 18.5Z" fill="#123a7a"/><g fill="#d6e2ee"><rect x="0.70" y="14.20" width="18.10" height="6.60" rx="3.30"/><circle cx="8.93" cy="15.20" r="6.00"/><circle cx="13.71" cy="14.64" r="4.40"/><circle cx="4.80" cy="16.25" r="4.00"/></g><g fill="url(#gf)"><rect x="1.50" y="15.00" width="16.50" height="5.00" rx="2.50"/><circle cx="8.93" cy="15.20" r="5.20"/><circle cx="13.71" cy="14.64" r="3.60"/><circle cx="4.80" cy="16.25" r="3.20"/></g></svg>
<div class="c tmp" style="left:577px;top:381px">-9</div>
<div class="c fl" style="left:577px;top:406px">-14</div>
<div class="c pr" style="left:577px;top:431px">777</div>
<div class="c wd" style="left:577px;top:453px">3</div>
<div class="c wd" style="left:577px;top:473px">7</div>
<div class="c dr" style="left:577px;top:493px">Ю-З</div>
<div class="c hu " style="left:577px;top:516px">69</div>
<div class="c hr" style="left:604px;top:282px">18</div>
<svg style="position:absolute;left:604px;top:300px" width="27" height="23" viewBox="0 0 27 23"><g fill="url(#gb)"><rect x="4.00" y="6.00" width="10.00" height="4.50" rx="2.25"/><circle cx="8.50" cy="4.80" r="3.30"/><circle cx="11.40" cy="5.77" r="2.30"/><circle cx="6.00" cy="7.12" r="2.00"/></g><path d="M13 6 Q16 5 17 8 L15 10Z" fill="#123a7a"/><g fill="url(#gb)"><rect x="15.50" y="6.50" width="10.00" height="4.50" rx="2.25"/><circle cx="20.00" cy="5.30" r="3.30"/><circle cx="22.90" cy="6.27" r="2.30"/><circle cx="17.50" cy="7.62" r="2.00"/></g><g fill="#d6e2ee"><rect x="15.80" y="10.80" width="9.90" height="4.40" rx="2.20"/><circle cx="20.32" cy="11.30" r="3.50"/><circle cx="22.79" cy="11.30" r="2.66"/><circle cx="18.20" cy="12.25" r="2.40"/></g><g fill="url(#gm)"><rect x="16.50" y="11.50" width="8.50" height="3.00" rx="1.50"/><circle cx="20.32" cy="11.30" r="2.81"/><circle cx="22.79" cy="11.30" r="1.96"/><circle cx="18.20" cy="12.25" r="1.70"/></g><g fill="#d6e2ee"><rect x="0.70" y="14.20" width="18.60" height="6.60" rx="3.30"/><circle cx="9.15" cy="15.20" r="6.00"/><circle cx="14.08" cy="14.64" r="4.40"/><circle cx="4.90" cy="16.25" r="4.00"/></g><g fill="url(#gf)"><rect x="1.50" y="15.00" width="17.00" height="5.00" rx="2.50"/><circle cx="9.15" cy="15.20" r="5.20"/><circle cx="14.08" cy="14.64" r="3.60"/><circle cx="4.90" cy="16.25" r="3.20"/></g></svg>
<div class="c tmp" style="left:604px;top:381px">-9</div>
<div class="c fl" style="left:604px;top:406px">-14</div>
<div class="c pr" style="left:604px;top:431px">777</div>
<div class="c wd" style="left:604px;top:453px">3</div>
<div class="c wd" style="left:604px;top:473px">6</div>
<div class="c dr" style="left:604px;top:493px">Ю-З</div>
<div class="c hu " style="left:604px;top:516px">70</div>
<div class="c hr" style="left:631px;top:282px">19</div>
<svg style="position:absolute;left:631px;top:300px" width="27" height="23" viewBox="0 0 27 23"><g fill="url(#gb)"><rect x="4.00" y="6.00" width="10.00" height="4.50" rx="2.25"/><circle cx="8.50" cy="4.80" r="3.30"/><circle cx="11.40" cy="5.77" r="2.30"/><circle cx="6.00" cy="7.12" r="2.00"/></g><path d="M13 6 Q16 5 17 8 L15 10Z" fill="#123a7a"/><g fill="url(#gb)"><rect x="15.50" y="6.50" width="10.00" height="4.50" rx="2.25"/><circle cx="20.00" cy="5.30" r="3.30"/><circle cx="22.90" cy="6.27" r="2.30"/><circle cx="17.50" cy="7.62" r="2.00"/></g><g fill="#d6e2ee"><rect x="15.80" y="10.80" width="9.90" height="4.40" rx="2.20"/><circle cx="20.32" cy="11.30" r="3.50"/><circle cx="22.79" cy="11.30" r="2.66"/><circle cx="18.20" cy="12.25" r="2.40"/></g><g fill="url(#gm)"><rect x="16.50" y="11.50" width="8.50" height="3.00" rx="1.50"/><circle cx="20.32" cy="11.30" r="2.81"/><circle cx="22.79" cy="11.30" r="1.96"/><circle cx="18.20" cy="12.25" r="1.70"/></g><g fill="#d6e2ee"><rect x="0.70" y="14.20" width="18.60" height="6.60" rx="3.30"/><circle cx="9.15" cy="15.20" r="6.00"/><circle cx="14.08" cy="14.64" r="4.40"/><circle cx="4.90" cy="16.25" r="4.00"/></g><g fill="url(#gf)"><rect x="1.50" y="15.00" width="17.00" height="5.00" rx="2.50"/><circle cx="9.15" cy="15.20" r="5.20"/><circle cx="14.08" cy="14.64" r="3.60"/><circle cx="4.90" cy="16.25" r="3.20"/></g></svg>
<div class="c tmp" style="left:631px;top:381px">-8</div>
<div class="c fl" style="left:631px;top:406px">-13</div>
<div class="c pr" style="left:631px;top:431px">777</div>
<div class="c wd" style="left:631px;top:453px">3</div>
<div class="c wd" style="left:631px;top:473px">6</div>
<div class="c dr" style="left:631px;top:493px">Ю-З</div>
<div class="c hu or" style="left:631px;top:516px">71</div>
<div class="c hr" style="left:658px;top:282px">20</div>
<svg style="position:absolute;left:658px;top:300px" width="27" height="23" viewBox="0 0 27 23"><g fill="url(#gb)"><rect x="4.00" y="6.00" width="10.00" height="4.50" rx="2.25"/><circle cx="8.50" cy="4.80" r="3.30"/><circle cx="11.40" cy="5.77" r="2.30"/><circle cx="6.00" cy="7.12" r="2.00"/></g><path d="M13 6 Q16 5 17 8 L15 10Z" fill="#123a7a"/><g fill="url(#gb)"><rect x="15.50" y="6.50" width="10.00" height="4.50" rx="2.25"/><circle cx="20.00" cy="5.30" r="3.30"/><circle cx="22.90" cy="6.27" r="2.30"/><circle cx="17.50" cy="7.62" r="2.00"/></g><g fill="#d6e2ee"><rect x="15.80" y="10.80" width="9.90" height="4.40" rx="2.20"/><circle cx="20.32" cy="11.30" r="3.50"/><circle cx="22.79" cy="11.30" r="2.66"/><circle cx="18.20" cy="12.25" r="2.40"/></g><g fill="url(#gm)"><rect x="16.50" y="11.50" width="8.50" height="3.00" rx="1.50"/><circle cx="20.32" cy="11.30" r="2.81"/><circle cx="22.79" cy="11.30" r="1.96"/><circle cx="18.20" cy="12.25" r="1.70"/></g><g fill="#d6e2ee"><rect x="0.70" y="14.20" width="18.60" height="6.60" rx="3.30"/><circle cx="9.15" cy="15.20" r="6.00"/><circle cx="14.08" cy="14.64" r="4.40"/><circle cx="4.90" cy="16.25" r="4.00"/></g><g fill="url(#gf)"><rect x="1.50" y="15.00" width="17.00" height="5.00" rx="2.50"/><circle cx="9.15" cy="15.20" r="5.20"/><circle cx="14.08" cy="14.64" r="3.60"/><circle cx="4.90" cy="16.25" r="3.20"/></g></svg>
<div class="c tmp" style="left:658px;top:381px">-8</div>
<div class="c fl" style="left:658px;top:406px">-13</div>
<div class="c pr" style="left:658px;top:431px">777</div>
<div class="c wd" style="left:658px;top:453px">3</div>
<div class="c wd" style="left:658px;top:473px">6</div>
<div class="c dr" style="left:658px;top:493px">Ю-З</div>
<div class="c hu " style="left:658px;top:516px">70</div>
<div class="c hr" style="left:685px;top:282px">21</div>
<svg style="position:absolute;left:685px;top:300px" width="27" height="23" viewBox="0 0 27 23"><g fill="url(#gb)"><rect x="4.00" y="6.00" width="10.00" height="4.50" rx="2.25"/><circle cx="8.50" cy="4.80" r="3.30"/><circle cx="11.40" cy="5.77" r="2.30"/><circle cx="6.00" cy="7.12" r="2.00"/></g><path d="M13 6 Q16 5 17 8 L15 10Z" fill="#123a7a"/><g fill="url(#gb)"><rect x="15.50" y="6.50" width="10.00" height="4.50" rx="2.25"/><circle cx="20.00" cy="5.30" r="3.30"/><circle cx="22.90" cy="6.27" r="2.30"/><circle cx="17.50" cy="7.62" r="2.00"/></g><g fill="#d6e2ee"><rect x="15.80" y="10.80" width="9.90" height="4.40" rx="2.20"/><circle cx="20.32" cy="11.30" r="3.50"/><circle cx="22.79" cy="11.30" r="2.66"/><circle cx="18.20" cy="12.25" r="2.40"/></g><g fill="url(#gm)"><rect x="16.50" y="11.50" width="8.50" height="3.00" rx="1.50"/><circle cx="20.32" cy="11.30" r="2.81"/><circle cx="22.79" cy="11.30" r="1.96"/><circle cx="18.20" cy="12.25" r="1.70"/></g><g fill="#d6e2ee"><rect x="0.70" y="14.20" width="18.60" height="6.60" rx="3.30"/><circle cx="9.15" cy="15.20" r="6.00"/><circle cx="14.08" cy="14.64" r="4.40"/><circle cx="4.90" cy="16.25" r="4.00"/></g><g fill="url(#gf)"><rect x="1.50" y="15.00" width="17.00" height="5.00" rx="2.50"/><circle cx="9.15" cy="15.20" r="5.20"/><circle cx="14.08" cy="14.64" r="3.60"/><circle cx="4.90" cy="16.25" r="3.20"/></g></svg>
<div class="c tmp" style="left:685px;top:381px">-7</div>
<div class="c fl" style="left:685px;top:406px">-12</div>
<div class="c pr" style="left:685px;top:431px">777</div>
<div class="c wd" style="left:685px;top:453px">3</div>
<div class="c wd" style="left:685px;top:473px">6</div>
<div class="c dr" style="left:685px;top:493px">Ю-З</div>
<div class="c hu " style="left:685px;top:516px">70</div>
<div class="c hr" style="left:712px;top:282px">22</div>
<svg style="position:absolute;left:712px;top:300px" width="27" height="23" viewBox="0 0 27 23"><g fill="url(#gb)"><rect x="4.00" y="6.00" width="10.00" height="4.50" rx="2.25"/><circle cx="8.50" cy="4.80" r="3.30"/><circle cx="11.40" cy="5.77" r="2.30"/><circle cx="6.00" cy="7.12" r="2.00"/></g><path d="M13 6 Q16 5 17 8 L15 10Z" fill="#123a7a"/><g fill="url(#gb)"><rect x="15.50" y="6.50" width="10.00" height="4.50" rx="2.25"/><circle cx="20.00" cy="5.30" r="3.30"/><circle cx="22.90" cy="6.27" r="2.30"/><circle cx="17.50" cy="7.62" r="2.00"/></g><g fill="#d6e2ee"><rect x="15.80" y="10.80" width="9.90" height="4.40" rx="2.20"/><circle cx="20.32" cy="11.30" r="3.50"/><circle cx="22.79" cy="11.30" r="2.66"/><circle cx="18.20" cy="12.25" r="2.40"/></g><g fill="url(#gm)"><rect x="16.50" y="11.50" width="8.50" height="3.00" rx="1.50"/><circle cx="20.32" cy="11.30" r="2.81"/><circle cx="22.79" cy="11.30" r="1.96"/><circle cx="18.20" cy="12.25" r="1.70"/></g><g fill="#d6e2ee"><rect x="0.70" y="14.20" width="18.60" height="6.60" rx="3.30"/><circle cx="9.15" cy="15.20" r="6.00"/><circle cx="14.08" cy="14.64" r="4.40"/><circle cx="4.90" cy="16.25" r="4.00"/></g><g fill="url(#gf)"><rect x="1.50" y="15.00" width="17.00" height="5.00" rx="2.50"/><circle cx="9.15" cy="15.20" r="5.20"/><circle cx="14.08" cy="14.64" r="3.60"/><circle cx="4.90" cy="16.25" r="3.20"/></g></svg>
<div class="c tmp" style="left:712px;top:381px">-6</div>
<div class="c fl" style="left:712px;top:406px">-11</div>
<div class="c pr" style="left:712px;top:431px">777</div>
<div class="c wd" style="left:712px;top:453px">3</div>
<div class="c wd" style="left:712px;top:473px">6</div>
<div class="c dr" style="left:712px;top:493px">Ю-З</div>
<div class="c hu " style="left:712px;top:516px">70</div>
<div class="c hr" style="left:739px;top:282px">23</div>
<svg style="position:absolute;left:739px;top:300px" width="27" height="23" viewBox="0 0 27 23"><g fill="url(#gb)"><rect x="4.00" y="6.50" width="11.50" height="5.00" rx="2.50"/><circle cx="9.18" cy="5.29" r="3.80"/><circle cx="12.51" cy="6.24" r="2.65"/><circle cx="6.30" cy="7.75" r="2.30"/></g><g fill="url(#gb)"><rect x="14.00" y="8.50" width="11.50" height="5.00" rx="2.50"/><circle cx="19.18" cy="7.29" r="3.80"/><circle cx="22.51" cy="8.24" r="2.65"/><circle cx="16.30" cy="9.75" r="2.30"/></g><g fill="#d6e2ee"><rect x="0.30" y="15.30" width="10.90" height="6.40" rx="3.20"/><circle cx="5.28" cy="14.13" r="3.83"/><circle cx="8.03" cy="15.78" r="2.88"/><circle cx="2.90" cy="17.25" r="2.60"/></g><g fill="url(#gm)"><rect x="1.00" y="16.00" width="9.50" height="5.00" rx="2.50"/><circle cx="5.28" cy="14.13" r="3.14"/><circle cx="8.03" cy="15.78" r="2.19"/><circle cx="2.90" cy="17.25" r="1.90"/></g><g fill="#e0eaf4"><rect x="5.20" y="15.45" width="21.10" height="7.85" rx="3.92"/><circle cx="14.78" cy="16.44" r="7.24"/><circle cx="20.43" cy="15.80" r="5.29"/><circle cx="9.90" cy="17.81" r="4.70"/></g><g fill="url(#gf2)"><rect x="6.00" y="16.25" width="19.50" height="6.25" rx="3.12"/><circle cx="14.78" cy="16.44" r="6.44"/><circle cx="20.43" cy="15.80" r="4.49"/><circle cx="9.90" cy="17.81" r="3.90"/></g></svg>
<div class="c tmp" style="left:739px;top:381px">-7</div>
<div class="c fl" style="left:739px;top:406px">-12</div>
<div class="c pr" style="left:739px;top:431px">777</div>
<div class="c wd" style="left:739px;top:453px">3</div>
<div class="c wd" style="left:739px;top:473px">6</div>
<div class="c dr" style="left:739px;top:493px">Ю-З</div>
<div class="c hu or" style="left:739px;top:516px">71</div>
<div class="c hr" style="left:767px;top:282px">00</div>
<svg style="position:absolute;left:767px;top:300px" width="27" height="23" viewBox="0 0 27 23"><g fill="url(#gb)"><rect x="4.00" y="6.50" width="11.50" height="5.00" rx="2.50"/><circle cx="9.18" cy="5.29" r="3.80"/><circle cx="12.51" cy="6.24" r="2.65"/><circle cx="6.30" cy="7.75" r="2.30"/></g><g fill="url(#gb)"><rect x="14.00" y="8.50" width="11.50" height="5.00" rx="2.50"/><circle cx="19.18" cy="7.29" r="3.80"/><circle cx="22.51" cy="8.24" r="2.65"/><circle cx="16.30" cy="9.75" r="2.30"/></g><g fill="#d6e2ee"><rect x="0.30" y="15.30" width="10.90" height="6.40" rx="3.20"/><circle cx="5.28" cy="14.13" r="3.83"/><circle cx="8.03" cy="15.78" r="2.88"/><circle cx="2.90" cy="17.25" r="2.60"/></g><g fill="url(#gm)"><rect x="1.00" y="16.00" width="9.50" height="5.00" rx="2.50"/><circle cx="5.28" cy="14.13" r="3.14"/><circle cx="8.03" cy="15.78" r="2.19"/><circle cx="2.90" cy="17.25" r="1.90"/></g><g fill="#e0eaf4"><rect x="5.20" y="15.45" width="21.10" height="7.85" rx="3.92"/><circle cx="14.78" cy="16.44" r="7.24"/><circle cx="20.43" cy="15.80" r="5.29"/><circle cx="9.90" cy="17.81" r="4.70"/></g><g fill="url(#gf2)"><rect x="6.00" y="16.25" width="19.50" height="6.25" rx="3.12"/><circle cx="14.78" cy="16.44" r="6.44"/><circle cx="20.43" cy="15.80" r="4.49"/><circle cx="9.90" cy="17.81" r="3.90"/></g></svg>
<div class="c tmp" style="left:767px;top:381px">-7</div>
<div class="c fl" style="left:767px;top:406px">-12</div>
<div class="c pr" style="left:767px;top:431px">777</div>
<div class="c wd" style="left:767px;top:453px">3</div>
<div class="c wd" style="left:767px;top:473px">6</div>
<div class="c dr" style="left:767px;top:493px">Ю-З</div>
<div class="c hu or" style="left:767px;top:516px">77</div>
<div class="c hr" style="left:794px;top:282px">01</div>
<svg style="position:absolute;left:794px;top:300px" width="27" height="23" viewBox="0 0 27 23"><g fill="url(#gb)"><rect x="4.00" y="6.50" width="11.50" height="5.00" rx="2.50"/><circle cx="9.18" cy="5.29" r="3.80"/><circle cx="12.51" cy="6.24" r="2.65"/><circle cx="6.30" cy="7.75" r="2.30"/></g><g fill="url(#gb)"><rect x="14.00" y="8.50" width="11.50" height="5.00" rx="2.50"/><circle cx="19.18" cy="7.29" r="3.80"/><circle cx="22.51" cy="8.24" r="2.65"/><circle cx="16.30" cy="9.75" r="2.30"/></g><g fill="#d6e2ee"><rect x="0.30" y="15.30" width="10.90" height="6.40" rx="3.20"/><circle cx="5.28" cy="14.13" r="3.83"/><circle cx="8.03" cy="15.78" r="2.88"/><circle cx="2.90" cy="17.25" r="2.60"/></g><g fill="url(#gm)"><rect x="1.00" y="16.00" width="9.50" height="5.00" rx="2.50"/><circle cx="5.28" cy="14.13" r="3.14"/><circle cx="8.03" cy="15.78" r="2.19"/><circle cx="2.90" cy="17.25" r="1.90"/></g><g fill="#e0eaf4"><rect x="5.20" y="15.45" width="21.10" height="7.85" rx="3.92"/><circle cx="14.78" cy="16.44" r="7.24"/><circle cx="20.43" cy="15.80" r="5.29"/><circle cx="9.90" cy="17.81" r="4.70"/></g><g fill="url(#gf2)"><rect x="6.00" y="16.25" width="19.50" height="6.25" rx="3.12"/><circle cx="14.78" cy="16.44" r="6.44"/><circle cx="20.43" cy="15.80" r="4.49"/><circle cx="9.90" cy="17.81" r="3.90"/></g></svg>
<div class="c tmp" style="left:794px;top:381px">-5</div>
<div class="c fl" style="left:794px;top:406px">-8</div>
<div class="c pr" style="left:794px;top:431px">777</div>
<div class="c wd" style="left:794px;top:453px">2</div>
<div class="c wd" style="left:794px;top:473px">5</div>
<div class="c dr" style="left:794px;top:493px">Ю-З</div>
<div class="c hu or" style="left:794px;top:516px">79</div>
<div class="c hr" style="left:821px;top:282px">02</div>
<svg style="position:absolute;left:821px;top:300px" width="27" height="23" viewBox="0 0 27 23"><g fill="url(#gb)"><rect x="4.00" y="6.50" width="11.50" height="5.00" rx="2.50"/><circle cx="9.18" cy="5.29" r="3.80"/><circle cx="12.51" cy="6.24" r="2.65"/><circle cx="6.30" cy="7.75" r="2.30"/></g><g fill="url(#gb)"><rect x="14.00" y="8.50" width="11.50" height="5.00" rx="2.50"/><circle cx="19.18" cy="7.29" r="3.80"/><circle cx="22.51" cy="8.24" r="2.65"/><circle cx="16.30" cy="9.75" r="2.30"/></g><g fill="#d6e2ee"><rect x="0.30" y="15.30" width="10.90" height="6.40" rx="3.20"/><circle cx="5.28" cy="14.13" r="3.83"/><circle cx="8.03" cy="15.78" r="2.88"/><circle cx="2.90" cy="17.25" r="2.60"/></g><g fill="url(#gm)"><rect x="1.00" y="16.00" width="9.50" height="5.00" rx="2.50"/><circle cx="5.28" cy="14.13" r="3.14"/><circle cx="8.03" cy="15.78" r="2.19"/><circle cx="2.90" cy="17.25" r="1.90"/></g><g fill="#e0eaf4"><rect x="5.20" y="15.45" width="21.10" height="7.85" rx="3.92"/><circle cx="14.78" cy="16.44" r="7.24"/><circle cx="20.43" cy="15.80" r="5.29"/><circle cx="9.90" cy="17.81" r="4.70"/></g><g fill="url(#gf2)"><rect x="6.00" y="16.25" width="19.50" height="6.25" rx="3.12"/><circle cx="14.78" cy="16.44" r="6.44"/><circle cx="20.43" cy="15.80" r="4.49"/><circle cx="9.90" cy="17.81" r="3.90"/></g></svg>
<div class="c tmp" style="left:821px;top:381px">-4</div>
<div class="c fl" style="left:821px;top:406px">-7</div>
<div class="c pr" style="left:821px;top:431px">777</div>
<div class="c wd" style="left:821px;top:453px">2</div>
<div class="c wd" style="left:821px;top:473px">5</div>
<div class="c dr" style="left:821px;top:493px">Ю-З</div>
<div class="c hu or" style="left:821px;top:516px">78</div>
<div class="c hr" style="left:848px;top:282px">03</div>
<svg style="position:absolute;left:848px;top:300px" width="27" height="23" viewBox="0 0 27 23"><g fill="url(#gb)"><rect x="4.00" y="6.50" width="11.50" height="5.00" rx="2.50"/><circle cx="9.18" cy="5.29" r="3.80"/><circle cx="12.51" cy="6.24" r="2.65"/><circle cx="6.30" cy="7.75" r="2.30"/></g><g fill="url(#gb)"><rect x="14.00" y="8.50" width="11.50" height="5.00" rx="2.50"/><circle cx="19.18" cy="7.29" r="3.80"/><circle cx="22.51" cy="8.24" r="2.65"/><circle cx="16.30" cy="9.75" r="2.30"/></g><g fill="#d6e2ee"><rect x="0.30" y="15.30" width="10.90" height="6.40" rx="3.20"/><circle cx="5.28" cy="14.13" r="3.83"/><circle cx="8.03" cy="15.78" r="2.88"/><circle cx="2.90" cy="17.25" r="2.60"/></g><g fill="url(#gm)"><rect x="1.00" y="16.00" width="9.50" height="5.00" rx="2.50"/><circle cx="5.28" cy="14.13" r="3.14"/><circle cx="8.03" cy="15.78" r="2.19"/><circle cx="2.90" cy="17.25" r="1.90"/></g><g fill="#e0eaf4"><rect x="5.20" y="15.45" width="21.10" height="7.85" rx="3.92"/><circle cx="14.78" cy="16.44" r="7.24"/><circle cx="20.43" cy="15.80" r="5.29"/><circle cx="9.90" cy="17.81" r="4.70"/></g><g fill="url(#gf2)"><rect x="6.00" y="16.25" width="19.50" height="6.25" rx="3.12"/><circle cx="14.78" cy="16.44" r="6.44"/><circle cx="20.43" cy="15.80" r="4.49"/><circle cx="9.90" cy="17.81" r="3.90"/></g></svg>
<div class="c tmp" style="left:848px;top:381px">-3</div>
<div class="c fl" style="left:848px;top:406px">-6</div>
<div class="c pr" style="left:848px;top:431px">777</div>
<div class="c wd" style="left:848px;top:453px">2</div>
<div class="c wd" style="left:848px;top:473px">5</div>
<div class="c dr" style="left:848px;top:493px">Ю-З</div>
<div class="c hu or" style="left:848px;top:516px">79</div>
<div class="c hr" style="left:875px;top:282px">04</div>
<svg style="position:absolute;left:875px;top:300px" width="27" height="23" viewBox="0 0 27 23"><g fill="url(#gb)"><rect x="4.00" y="6.50" width="11.50" height="5.00" rx="2.50"/><circle cx="9.18" cy="5.29" r="3.80"/><circle cx="12.51" cy="6.24" r="2.65"/><circle cx="6.30" cy="7.75" r="2.30"/></g><g fill="url(#gb)"><rect x="14.00" y="8.50" width="11.50" height="5.00" rx="2.50"/><circle cx="19.18" cy="7.29" r="3.80"/><circle cx="22.51" cy="8.24" r="2.65"/><circle cx="16.30" cy="9.75" r="2.30"/></g><g fill="#d6e2ee"><rect x="0.30" y="15.30" width="10.90" height="6.40" rx="3.20"/><circle cx="5.28" cy="14.13" r="3.83"/><circle cx="8.03" cy="15.78" r="2.88"/><circle cx="2.90" cy="17.25" r="2.60"/></g><g fill="url(#gm)"><rect x="1.00" y="16.00" width="9.50" height="5.00" rx="2.50"/><circle cx="5.28" cy="14.13" r="3.14"/><circle cx="8.03" cy="15.78" r="2.19"/><circle cx="2.90" cy="17.25" r="1.90"/></g><g fill="#e0eaf4"><rect x="5.20" y="15.45" width="21.10" height="7.85" rx="3.92"/><circle cx="14.78" cy="16.44" r="7.24"/><circle cx="20.43" cy="15.80" r="5.29"/><circle cx="9.90" cy="17.81" r="4.70"/></g><g fill="url(#gf2)"><rect x="6.00" y="16.25" width="19.50" height="6.25" rx="3.12"/><circle cx="14.78" cy="16.44" r="6.44"/><circle cx="20.43" cy="15.80" r="4.49"/><circle cx="9.90" cy="17.81" r="3.90"/></g></svg>
<div class="c tmp" style="left:875px;top:381px">-3</div>
<div class="c fl" style="left:875px;top:406px">-6</div>
<div class="c pr" style="left:875px;top:431px">777</div>
<div class="c wd" style="left:875px;top:453px">2</div>
<div class="c wd" style="left:875px;top:473px">5</div>
<div class="c dr" style="left:875px;top:493px">Ю-З</div>
<div class="c hu or" style="left:875px;top:516px">79</div>
<div class="c hr" style="left:902px;top:282px">05</div>
<svg style="position:absolute;left:902px;top:300px" width="27" height="23" viewBox="0 0 27 23"><g fill="url(#gb)"><rect x="4.00" y="6.50" width="11.50" height="5.00" rx="2.50"/><circle cx="9.18" cy="5.29" r="3.80"/><circle cx="12.51" cy="6.24" r="2.65"/><circle cx="6.30" cy="7.75" r="2.30"/></g><g fill="url(#gb)"><rect x="14.00" y="8.50" width="11.50" height="5.00" rx="2.50"/><circle cx="19.18" cy="7.29" r="3.80"/><circle cx="22.51" cy="8.24" r="2.65"/><circle cx="16.30" cy="9.75" r="2.30"/></g><g fill="#d6e2ee"><rect x="0.30" y="15.30" width="10.90" height="6.40" rx="3.20"/><circle cx="5.28" cy="14.13" r="3.83"/><circle cx="8.03" cy="15.78" r="2.88"/><circle cx="2.90" cy="17.25" r="2.60"/></g><g fill="url(#gm)"><rect x="1.00" y="16.00" width="9.50" height="5.00" rx="2.50"/><circle cx="5.28" cy="14.13" r="3.14"/><circle cx="8.03" cy="15.78" r="2.19"/><circle cx="2.90" cy="17.25" r="1.90"/></g><g fill="#e0eaf4"><rect x="5.20" y="15.45" width="21.10" height="7.85" rx="3.92"/><circle cx="14.78" cy="16.44" r="7.24"/><circle cx="20.43" cy="15.80" r="5.29"/><circle cx="9.90" cy="17.81" r="4.70"/></g><g fill="url(#gf2)"><rect x="6.00" y="16.25" width="19.50" height="6.25" rx="3.12"/><circle cx="14.78" cy="16.44" r="6.44"/><circle cx="20.43" cy="15.80" r="4.49"/><circle cx="9.90" cy="17.81" r="3.90"/></g></svg>
<div class="c tmp" style="left:902px;top:381px">-3</div>
<div class="c fl" style="left:902px;top:406px">-6</div>
<div class="c pr" style="left:902px;top:431px">777</div>
<div class="c wd" style="left:902px;top:453px">2</div>
<div class="c dr" style="left:902px;top:493px">Ю-З</div>
<div class="c hu or" style="left:902px;top:516px">80</div>
<div style="position:absolute;left:929px;top:300px;width:3px;height:20px;overflow:hidden"><svg style="position:absolute;left:0px;top:1px" width="27" height="23" viewBox="0 0 27 23"><g fill="url(#gb)"><rect x="4.00" y="6.50" width="11.50" height="5.00" rx="2.50"/><circle cx="9.18" cy="5.29" r="3.80"/><circle cx="12.51" cy="6.24" r="2.65"/><circle cx="6.30" cy="7.75" r="2.30"/></g><g fill="url(#gb)"><rect x="14.00" y="8.50" width="11.50" height="5.00" rx="2.50"/><circle cx="19.18" cy="7.29" r="3.80"/><circle cx="22.51" cy="8.24" r="2.65"/><circle cx="16.30" cy="9.75" r="2.30"/></g><g fill="#d6e2ee"><rect x="0.30" y="15.30" width="10.90" height="6.40" rx="3.20"/><circle cx="5.28" cy="14.13" r="3.83"/><circle cx="8.03" cy="15.78" r="2.88"/><circle cx="2.90" cy="17.25" r="2.60"/></g><g fill="url(#gm)"><rect x="1.00" y="16.00" width="9.50" height="5.00" rx="2.50"/><circle cx="5.28" cy="14.13" r="3.14"/><circle cx="8.03" cy="15.78" r="2.19"/><circle cx="2.90" cy="17.25" r="1.90"/></g><g fill="#e0eaf4"><rect x="5.20" y="15.45" width="21.10" height="7.85" rx="3.92"/><circle cx="14.78" cy="16.44" r="7.24"/><circle cx="20.43" cy="15.80" r="5.29"/><circle cx="9.90" cy="17.81" r="4.70"/></g><g fill="url(#gf2)"><rect x="6.00" y="16.25" width="19.50" height="6.25" rx="3.12"/><circle cx="14.78" cy="16.44" r="6.44"/><circle cx="20.43" cy="15.80" r="4.49"/><circle cx="9.90" cy="17.81" r="3.90"/></g></svg></div>
<div class="c11 b" style="left:402px;top:541px">09:42</div>
<div class="c11 g9" style="left:457px;top:541px">16:35</div>
<div class="c11 b" style="left:402px;top:565px">10:16</div>
<div class="c11 g9" style="left:457px;top:565px">13:48</div>
<svg style="position:absolute;left:445px;top:585px" width="22" height="22"><circle cx="10.8" cy="10.4" r="9.3" fill="none" stroke="#4d6b9a" stroke-width="1.7"/></svg>
<div style="position:absolute;left:26px;top:609px;width:906px;height:15px;background:#fff"></div>
<svg style="position:absolute;left:30px;top:612px" width="7" height="10"><path d="M6 0 L0.5 4.8 L6 9.5Z" fill="#8a8a8a"/></svg>
<div style="position:absolute;left:44px;top:612px;width:331px;height:9px;border-radius:4.5px;background:#8c8c8c"></div>
<svg style="position:absolute;left:920px;top:612px" width="7" height="10"><path d="M0.5 0 L6 4.8 L0.5 9.5Z" fill="#8a8a8a"/></svg>
<div class="coll" style="top:623px;height:19px"><span>Свернуть таблицу</span><div class="cline" style="left:124px;top:9px;width:768px"></div><svg style="position:absolute;left:887px;top:6px" width="9" height="6"><path d="M0 5.5 L4.5 0.5 L9 5.5Z" fill="#c4c4c4"/></svg></div>

<div class="news">
 <div class="badge">Новости погоды</div>
 <div class="nt" style="left:114px;top:7px">36 минут назад минимальная температура воздуха наблюдалась <b>в Санкт-Петербурге</b> в Пулково (аэропорт): -11 <sup>o</sup>C .</div>
 <div class="nt" style="left:8px;top:26px">За последние 12 часов максимальная температура воздуха наблюдалась <b>в Санкт-Петербурге</b>: -7 <sup>o</sup>C .</div>
</div>
<div class="coll" style="top:706px;height:18px"><span>Свернуть текст</span><div class="cline" style="left:108px;top:9px;width:784px"></div><svg style="position:absolute;left:887px;top:6px" width="9" height="6"><path d="M0 5.5 L4.5 0.5 L9 5.5Z" fill="#c4c4c4"/></svg></div>
<div class="wm"><svg style="position:absolute;left:0;top:0" width="26" height="56" viewBox="0 0 26 56"><g fill="none" stroke="#fff" stroke-width="2.6" stroke-linejoin="round"><path d="M12.5 14 C7 13 5.5 8.5 7 5.5 C9 1.5 16 1.5 18 5.5 C19.5 8.5 18 13 12.5 14 C4 14.5 1.5 20 2 24 C3 29 8 30.5 12.5 30.5 C17 30.5 22 29 23 24 C23.5 20 21 14.5 12.5 14Z"/><path d="M12.5 14.5 V41"/><path d="M6 37.5 H19 V45.5 L12.5 51 L6 45.5Z"/></g></svg><span>асиенда.ру</span></div>

</body></html>
